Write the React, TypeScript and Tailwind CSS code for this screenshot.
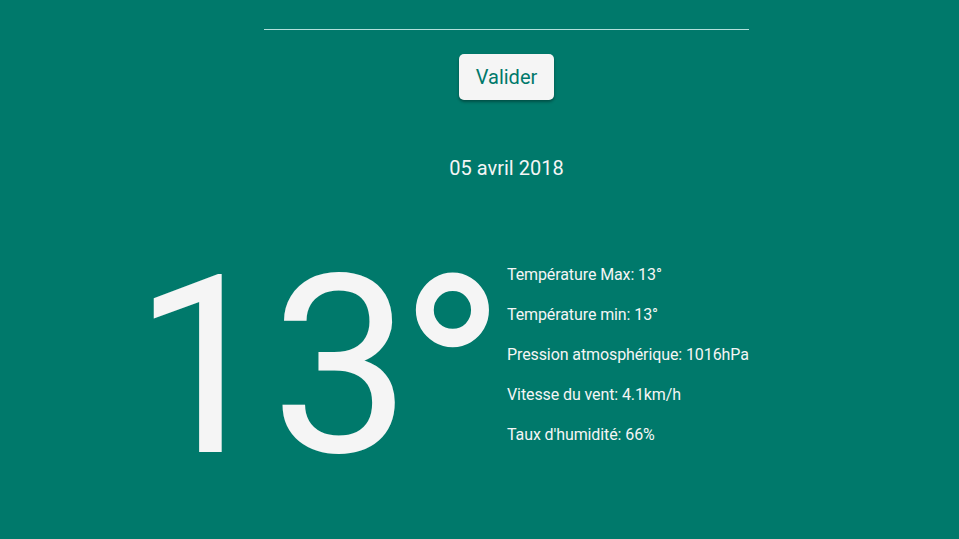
import React from "react";

export default function App() {
  const items = [
    "Température Max: 13°",
    "Température min: 13°",
    "Pression atmosphérique: 1016hPa",
    "Vitesse du vent: 4.1km/h",
    "Taux d'humidité: 66%",
  ];
  return (
    <div
      className="w-[959px] h-[539px] overflow-hidden bg-[#00796b] text-[#f5f5f5]"
      style={{ fontFamily: "Roboto, 'Liberation Sans', sans-serif" }}
    >
      <div className="ml-[264px] w-[485px] flex flex-col items-center">
        <div className="mt-[29px] w-full h-px bg-[#b2dfdb]" />
        <button className="mt-[24px] w-[95px] h-[46px] rounded-[5px] bg-[#f5f5f5] text-[#00796b] text-[20px] shadow-[0_2px_3px_rgba(0,0,0,0.35)]">
          Valider
        </button>
        <div className="mt-[56px] text-[20px] leading-[24px]">05 avril 2018</div>
      </div>
      <div className="mt-[72px] ml-[133px] flex items-start">
        <div className="w-[374px] flex items-start -mt-[9px] text-[249px] leading-none font-normal">
          <span className="-mr-[2px]">1</span>
          <span>3</span>
          <span className="text-[296px] -ml-[14px] -mt-[6px]">°</span>
        </div>
        <div className="flex flex-col gap-[21px] text-[16px] leading-[19px] tracking-[-0.1px] mt-[13px]">
          {items.map((t) => (
            <div key={t}>{t}</div>
          ))}
        </div>
      </div>
    </div>
  );
}
